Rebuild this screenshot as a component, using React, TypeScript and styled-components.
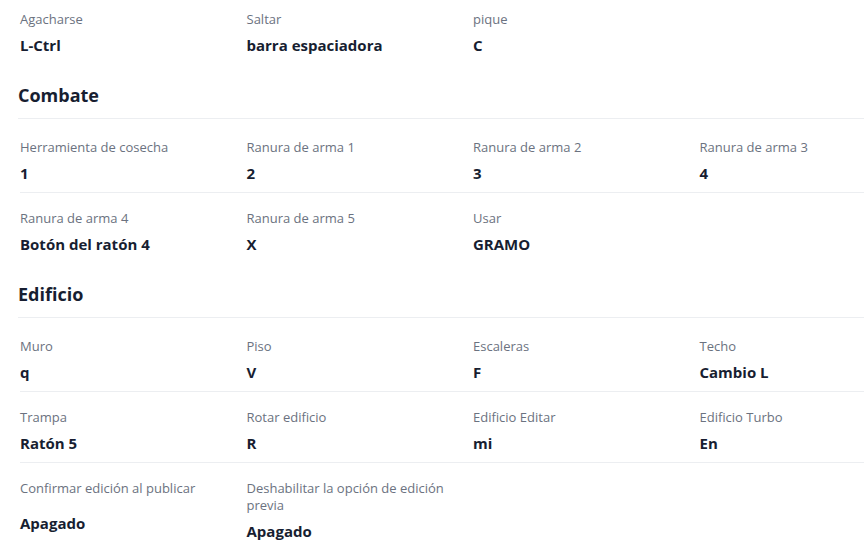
import styled, { createGlobalStyle } from 'styled-components'

const GlobalStyle = createGlobalStyle`
  html, body {
    margin: 0;
    padding: 0;
    background: #ffffff;
    overflow: hidden;
  }
  body {
    font-family: 'Open Sans', 'Noto Sans', sans-serif;
    color: #171e31;
  }
`

const Page = styled.main`
  margin-top: -6px;
  padding-left: 18px;
  width: 930px;
`
const Section = styled.section`
  display: flex;
  flex-direction: column;
`
const Heading = styled.h2`
  margin: 17px 0 0;
  padding-bottom: 9px;
  border-bottom: 1px solid #eceef1;
  font-size: 18px;
  line-height: 28px;
  font-weight: 700;
  color: #171e31;
`
const Rows = styled.div<{ $first?: boolean }>`
  margin-top: ${p => (p.$first ? '0' : '3px')};
  margin-left: 2px;
`
const Row = styled.div<{ $last?: boolean }>`
  display: grid;
  grid-template-columns: repeat(4, 226.5px);
  border-bottom: ${p => (p.$last ? 'none' : '1px solid #eceef1')};
`
const Cell = styled.div`
  display: flex;
  flex-direction: column;
  padding: 17px 10px 8px 0;
`
const Label = styled.span`
  font-size: 13px;
  line-height: 17px;
  color: #6b7280;
  margin-bottom: 6px;
`
const Value = styled.span`
  margin: auto 0;
  font-size: 15px;
  line-height: 22px;
  font-weight: 700;
  color: #171e31;
`

type Bind = [string, string]

const movement: Bind[][] = [
  [['Agacharse', 'L-Ctrl'], ['Saltar', 'barra espaciadora'], ['pique', 'C']],
]

const combat: Bind[][] = [
  [['Herramienta de cosecha', '1'], ['Ranura de arma 1', '2'], ['Ranura de arma 2', '3'], ['Ranura de arma 3', '4']],
  [['Ranura de arma 4', 'Botón del ratón 4'], ['Ranura de arma 5', 'X'], ['Usar', 'GRAMO']],
]

const building: Bind[][] = [
  [['Muro', 'q'], ['Piso', 'V'], ['Escaleras', 'F'], ['Techo', 'Cambio L']],
  [['Trampa', 'Ratón 5'], ['Rotar edificio', 'R'], ['Edificio Editar', 'mi'], ['Edificio Turbo', 'En']],
  [['Confirmar edición al publicar', 'Apagado'], ['Deshabilitar la opción de edición previa', 'Apagado']],
]

const BindRows = ({ rows, first }: { rows: Bind[][]; first?: boolean }) => (
  <Rows $first={first}>
    {rows.map((row, i) => (
      <Row key={i} $last={i === rows.length - 1}>
        {row.map(([label, value]) => (
          <Cell key={label}>
            <Label>{label}</Label>
            <Value>{value}</Value>
          </Cell>
        ))}
      </Row>
    ))}
  </Rows>
)

export default function App() {
  return (
    <>
      <GlobalStyle />
      <Page>
        <Section>
          <BindRows rows={movement} first />
        </Section>
        <Section>
          <Heading>Combate</Heading>
          <BindRows rows={combat} />
        </Section>
        <Section>
          <Heading>Edificio</Heading>
          <BindRows rows={building} />
        </Section>
      </Page>
    </>
  )
}
